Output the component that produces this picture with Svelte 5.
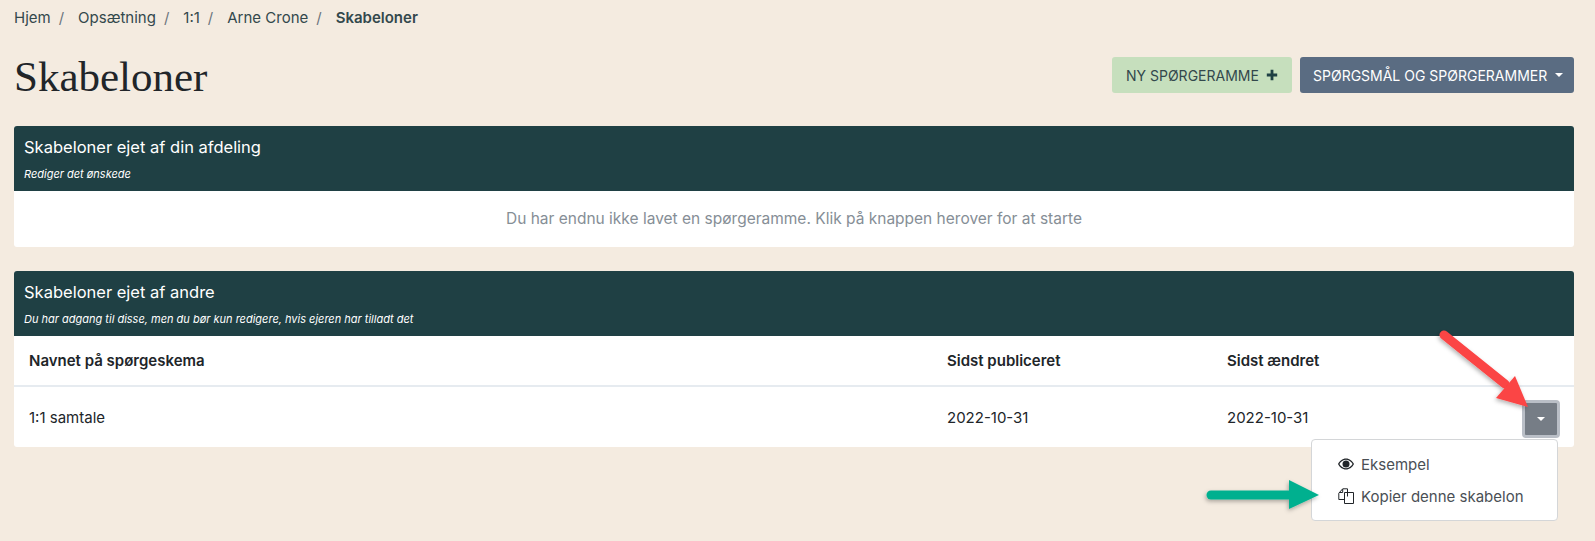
<script>
    const crumbs = ['Hjem', 'Opsætning', '1:1', 'Arne Crone'];
</script>

<main class="page">
    <nav class="breadcrumb">
        {#each crumbs as crumb}
            <a href="#top">{crumb}</a><span class="sep">/</span>
        {/each}
        <strong>Skabeloner</strong>
    </nav>

    <header class="title-row">
        <h1>Skabeloner</h1>
        <div class="actions">
            <button type="button" class="btn-new">
                NY SPØRGERAMME
                <svg viewBox="0 0 12 12" width="12" height="12"><path d="M4.6 0.8h2.8v3.8h3.8v2.8H7.4v3.8H4.6V7.4H0.8V4.6h3.8z" fill="#1f4044" /></svg>
            </button>
            <button type="button" class="btn-questions">
                SPØRGSMÅL OG SPØRGERAMMER
                <span class="caret"></span>
            </button>
        </div>
    </header>

    <section class="card first">
        <div class="card-head">
            <h2>Skabeloner ejet af din afdeling</h2>
            <p>Rediger det ønskede</p>
        </div>
        <div class="empty">Du har endnu ikke lavet en spørgeramme. Klik på knappen herover for at starte</div>
    </section>

    <section class="card">
        <div class="card-head">
            <h2>Skabeloner ejet af andre</h2>
            <p>Du har adgang til disse, men du bør kun redigere, hvis ejeren har tilladt det</p>
        </div>
        <div class="row row-head">
            <span>Navnet på spørgeskema</span>
            <span>Sidst publiceret</span>
            <span>Sidst ændret</span>
        </div>
        <div class="row">
            <span>1:1 samtale</span>
            <span>2022-10-31</span>
            <span>2022-10-31</span>
            <button type="button" class="btn-toggle" aria-label="Menu"><span class="caret"></span></button>
        </div>
    </section>

    <!-- Dropdown opened from the row toggle -->
    <div class="menu">
        <div class="menu-item">
            <svg viewBox="0 0 16 16" width="16" height="16" fill="#212529">
                <path d="M8 2.5C4.4 2.5 1.4 5 0 8c1.4 3 4.4 5.5 8 5.5s6.600-2.500 8-5.500c-1.400-3-4.400-5.500-8-5.500zM8 12.300C5.300 12.300 2.900 10.500 1.400 8 2.900 5.500 5.300 3.700 8 3.700s5.100 1.800 6.600 4.300c-1.500 2.500-3.900 4.300-6.600 4.300z" />
                <circle cx="8" cy="8" r="3.500" />
            </svg>
            Eksempel
        </div>
        <div class="menu-item">
            <svg viewBox="0 0 16 16" width="16" height="16" fill="none" stroke="#212529" stroke-width="1">
                <path d="M6.500 4.500h9v11h-9z" />
                <path d="M6.500 11.500H0.800V5.200L4.700 0.800h4.800v3.700" />
                <path d="M9.500 8.500v-4M4.700 1v3.500H1" />
            </svg>
            Kopier denne skabelon
        </div>
    </div>

    <!-- Annotation arrows drawn on top of the screenshot -->
    <svg class="arrows" viewBox="0 0 1595 541" width="1595" height="541">
        <defs>
            <filter id="shadow" x="-20%" y="-20%" width="140%" height="140%">
                <feDropShadow dx="-1" dy="2" stdDeviation="2" flood-color="#000" flood-opacity="0.3" />
            </filter>
        </defs>
        <g filter="url(#shadow)">
            <path d="M1444 335L1505 384" stroke="#fb4444" stroke-width="9" stroke-linecap="round" />
            <path d="M1528 407L1496 398L1515 376z" fill="#fb4444" />
        </g>
        <g filter="url(#shadow)">
            <path d="M1211 495H1292" stroke="#05b08f" stroke-width="9" stroke-linecap="round" />
            <path d="M1319 495L1289 480V509z" fill="#05b08f" />
        </g>
    </svg>
</main>

<style>
    :global(body) {
        margin: 0;
        background: #f4ebe0;
    }

    .page {
        position: relative;
        height: 541px;
        padding: 0 21px 0 14px;
        box-sizing: content-box;
        overflow: hidden;
        font-family: Inter, sans-serif;
        font-size: 16px;
        color: #212529;
    }

    .breadcrumb {
        display: flex;
        align-items: center;
        height: 35px;
        font-size: 15px;
    }

    .breadcrumb a {
        color: #33484c;
        text-decoration: none;
    }

    .breadcrumb .sep {
        color: #6c757d;
        margin: 0 14px 0 8px;
    }

    .breadcrumb strong {
        color: #33484c;
        font-weight: 600;
    }

    .title-row {
        display: flex;
        justify-content: space-between;
        align-items: flex-start;
        height: 91px;
    }

    h1 {
        margin: 17px 0 0;
        font-family: "Liberation Serif", serif;
        font-size: 43px;
        font-weight: 400;
        line-height: 50px;
    }

    .actions {
        display: flex;
        gap: 8px;
        margin-top: 22px;
    }

    .actions button {
        display: flex;
        align-items: center;
        height: 36px;
        border: none;
        border-radius: 3px;
        font-family: inherit;
        font-size: 14px;
    }

    .btn-new {
        gap: 7px;
        width: 180px;
        padding: 0 0 0 14px;
        background: #c6dfbd;
        color: #33484c;
    }

    .btn-questions {
        gap: 8px;
        width: 274px;
        padding: 0 0 0 13px;
        background: #5a6c82;
        color: #fff;
    }

    .caret {
        display: inline-block;
        border-top: 4.500px solid #fff;
        border-left: 4.500px solid transparent;
        border-right: 4.500px solid transparent;
    }

    .card {
        width: 1560px;
        background: #fff;
        border-radius: 3px;
        overflow: hidden;
    }

    .card.first {
        margin-bottom: 24px;
    }

    .card-head {
        height: 65px;
        box-sizing: border-box;
        padding: 9px 10px 0;
        background: #1f4044;
        color: #fff;
    }

    h2 {
        margin: 0;
        font-size: 16.500px;
        font-weight: 400;
        line-height: 24px;
    }

    .card-head p {
        margin: 7px 0 0;
        font-size: 11px;
        font-style: italic;
        line-height: 16px;
    }

    .empty {
        height: 56px;
        line-height: 56px;
        text-align: center;
        color: #868e96;
        font-size: 15.500px;
    }

    .row {
        display: grid;
        grid-template-columns: 918px 280px 1fr;
        align-items: center;
        position: relative;
        height: 60px;
        padding-left: 15px;
        font-size: 15px;
    }

    .row-head {
        height: 49px;
        border-bottom: 2px solid #e6ebf0;
        font-weight: 600;
    }

    .btn-toggle {
        position: absolute;
        right: 14px;
        top: 13px;
        display: flex;
        align-items: center;
        justify-content: center;
        width: 38px;
        height: 38px;
        box-sizing: border-box;
        padding: 0;
        background: #767d86;
        border: 3px solid #babfc7;
        border-radius: 4px;
    }

    .menu {
        position: absolute;
        left: 1311px;
        top: 439px;
        width: 247px;
        height: 82px;
        box-sizing: border-box;
        padding: 8px 0;
        background: #fff;
        border: 1px solid #d4d6d8;
        border-radius: 4px;
        font-size: 15px;
        color: #4a4f55;
    }

    .menu-item {
        display: flex;
        align-items: center;
        gap: 7px;
        height: 32px;
        padding-left: 26px;
    }

    .arrows {
        position: absolute;
        left: 0;
        top: 0;
        pointer-events: none;
    }
</style>
